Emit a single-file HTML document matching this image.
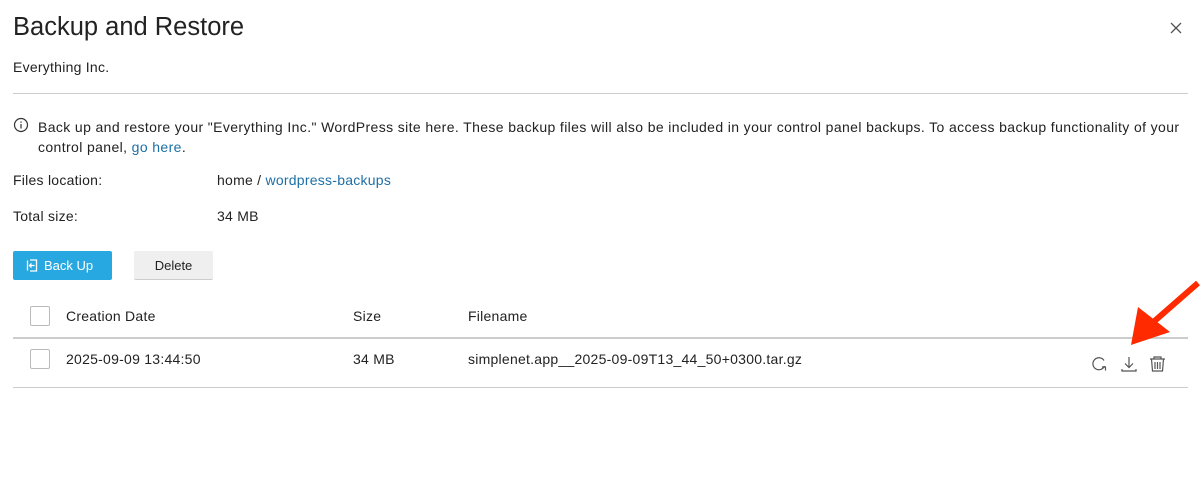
<!DOCTYPE html>
<html><head><style>
body{margin:0;width:1200px;height:482px;background:#fff;font-family:"Liberation Sans",sans-serif;color:#222;position:relative;overflow:hidden}
.a{position:absolute;white-space:nowrap}
a{color:#1d6fa5;text-decoration:none}
.t{letter-spacing:0.25px}
.cb{position:absolute;width:18px;height:18px;border:1px solid #bbb;border-radius:2px;background:#fff}
</style></head><body>
<div class="a" style="left:13px;top:13px;font-size:25.5px;color:#222">Backup and Restore</div>
<svg class="a" style="left:1170px;top:22px" width="12" height="12" viewBox="0 0 12 12"><path d="M1 1L11 11M11 1L1 11" stroke="#555" stroke-width="1.3"/></svg>
<div class="a t" style="left:13px;top:59px;font-size:14px">Everything Inc.</div>
<div class="a" style="left:13px;top:93px;width:1175px;height:1px;background:#ccc"></div>
<svg class="a" style="left:13px;top:117px" width="16" height="16" viewBox="0 0 16 16"><circle cx="8" cy="8" r="6.5" fill="none" stroke="#333" stroke-width="1.2"/><rect x="7.4" y="7" width="1.2" height="4.5" fill="#333"/><rect x="7.4" y="4.5" width="1.2" height="1.3" fill="#333"/></svg>
<div class="a" style="left:38px;top:117px;font-size:14px;line-height:20px;white-space:nowrap;letter-spacing:0.38px">Back up and restore your "Everything Inc." WordPress site here. These backup files will also be included in your control panel backups. To access backup functionality of your<br>control panel, <a>go here</a>.</div>
<div class="a t" style="left:13px;top:172px;font-size:14px">Files location:</div>
<div class="a t" style="left:217px;top:172px;font-size:14px">home / <a>wordpress-backups</a></div>
<div class="a t" style="left:13px;top:208px;font-size:14px">Total size:</div>
<div class="a t" style="left:217px;top:208px;font-size:14px">34 MB</div>
<div class="a" style="left:13px;top:251px;width:99px;height:29px;background:#28a8e0;border-radius:2px;color:#fff;font-size:13px;line-height:29px">
<svg style="position:absolute;left:13px;top:8px" width="12" height="13" viewBox="0 0 12 13"><path d="M4 1H10.5V12H4" fill="none" stroke="#fff" stroke-width="1.3"/><path d="M1.5 1.5V11.5" stroke="#fff" stroke-width="1.3"/><path d="M8.5 6.5H4M5.5 4.5L3.5 6.5L5.5 8.5" fill="none" stroke="#fff" stroke-width="1.3"/></svg>
<span style="position:absolute;left:31px">Back Up</span></div>
<div class="a" style="left:134px;top:251px;width:79px;height:28px;background:#efefef;border-bottom:1px solid #ccc;border-radius:2px;font-size:13px;line-height:29px;text-align:center">Delete</div>
<div class="cb" style="left:30px;top:306px"></div>
<div class="a t" style="left:66px;top:308px;font-size:14px">Creation Date</div>
<div class="a t" style="left:353px;top:308px;font-size:14px">Size</div>
<div class="a t" style="left:468px;top:308px;font-size:14px">Filename</div>
<div class="a" style="left:13px;top:337px;width:1175px;height:2px;background:#ccc"></div>
<div class="cb" style="left:30px;top:349px"></div>
<div class="a t" style="left:66px;top:351px;font-size:14px">2025-09-09 13:44:50</div>
<div class="a t" style="left:353px;top:351px;font-size:14px">34 MB</div>
<div class="a t" style="left:468px;top:351px;font-size:14px">simplenet.app__2025-09-09T13_44_50+0300.tar.gz</div>
<div class="a" style="left:13px;top:387px;width:1175px;height:1px;background:#ccc"></div>
<svg class="a" style="left:1090px;top:354px" width="80" height="20" viewBox="0 0 80 20">
<path d="M14.5 12A6 6 0 1 1 14 6.5" fill="none" stroke="#555" stroke-width="1.2"/><path d="M12 13H15.5V16.5" fill="none" stroke="#555" stroke-width="1.2"/>
<path d="M39 3V13M35 9.5L39 13.5L43 9.5M32 15V17H46V15" fill="none" stroke="#555" stroke-width="1.2"/>
<path d="M60 5H75M64 5V3H71V5M61.5 5L62.5 17H72.5L73.5 5M65 8V15M67.5 8V15M70 8V15" fill="none" stroke="#555" stroke-width="1.2"/>
</svg>
<svg class="a" style="left:0;top:0" width="1200" height="482"><line x1="1198" y1="283" x2="1150" y2="325" stroke="#ff2a00" stroke-width="6"/><polygon points="1131,345 1138,307 1170,332" fill="#ff2a00"/></svg>
</body></html>
